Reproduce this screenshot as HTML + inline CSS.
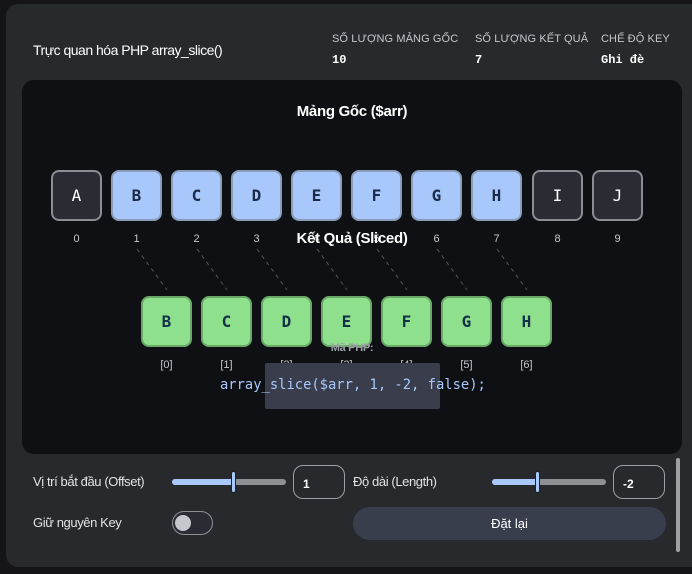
<!DOCTYPE html>
<html><head><meta charset="utf-8"><style>
*{box-sizing:border-box;margin:0;padding:0}
body{width:692px;height:574px;background:#151517;font-family:"Liberation Sans",sans-serif;position:relative;overflow:hidden;color:#e3e3e3}
.card{position:absolute;left:6px;top:4px;width:700px;height:563px;background:#28292c;border-radius:12px}
.a{position:absolute}
.title{left:33px;top:42px;font-size:14px;color:#fff;letter-spacing:-0.5px}
.sl{font-size:11px;color:#c4c7cc;letter-spacing:0.1px;top:33px}
.sv{font-family:"Liberation Mono",monospace;font-weight:bold;font-size:12px;color:#fff;top:53px}
.panel{left:22px;top:80px;width:660px;height:374px;background:#0f1014;border-radius:12px}
.h{font-weight:bold;font-size:15px;color:#fff;width:100%;text-align:center;letter-spacing:-0.3px}
.box{position:absolute;width:51px;height:51px;border-radius:8px;border:2px solid #8a8d92;display:flex;align-items:center;justify-content:center;font-family:"DejaVu Sans Mono","Liberation Mono",monospace;font-weight:bold;font-size:16px}
.d{background:#2b2c33;color:#fff;font-weight:normal}
.b{background:#a8c7fa;color:#1a2a4a;border-color:#8a9cb8}
.g{background:#8fe08c;color:#13314a;border-color:#6aa867}
.idx{position:absolute;font-size:11px;color:#c4c7cc;width:51px;text-align:center}
.lbl{font-size:13px;color:#e3e3e3;letter-spacing:-0.4px}
.track{position:absolute;height:6px;border-radius:3px;background:#8e9094}
.fill{position:absolute;height:6px;border-radius:3px;background:#a8c7fa}
.thumb{position:absolute;width:5px;height:22px;border-radius:3px;background:#a8c7fa;border:1px solid #222}
.inp{position:absolute;width:52px;height:34px;border:1px solid #9aa0a6;border-radius:10px;font-size:12px;color:#fff;padding:11px 0 0 9px;font-weight:bold}
</style></head><body>
<div class="card"></div>
<div class="a title">Trực quan hóa PHP array_slice()</div>
<div class="a sl" style="left:332px">SỐ LƯỢNG MẢNG GỐC</div>
<div class="a sl" style="left:475px">SỐ LƯỢNG KẾT QUẢ</div>
<div class="a sl" style="left:601px">CHẾ ĐỘ KEY</div>
<div class="a sv" style="left:332px">10</div>
<div class="a sv" style="left:475px">7</div>
<div class="a sv" style="left:601px">Ghi đè</div>
<div class="a panel">
<div class="a h" style="top:23px">Mảng Gốc ($arr)</div>
</div>
<svg class="a" style="left:0;top:0" width="692" height="574">
<g stroke="#555" stroke-dasharray="4,4" stroke-width="1">
<line x1="137" y1="249" x2="167" y2="290"/><line x1="197" y1="249" x2="227" y2="290"/>
<line x1="257" y1="249" x2="287" y2="290"/><line x1="317" y1="249" x2="347" y2="290"/>
<line x1="377" y1="249" x2="407" y2="290"/><line x1="437" y1="249" x2="467" y2="290"/>
<line x1="497" y1="249" x2="527" y2="290"/></g></svg>
<div class="box d" style="left:51px;top:170px">A</div>
<div class="box b" style="left:111px;top:170px">B</div>
<div class="box b" style="left:171px;top:170px">C</div>
<div class="box b" style="left:231px;top:170px">D</div>
<div class="box b" style="left:291px;top:170px">E</div>
<div class="box b" style="left:351px;top:170px">F</div>
<div class="box b" style="left:411px;top:170px">G</div>
<div class="box b" style="left:471px;top:170px">H</div>
<div class="box d" style="left:532px;top:170px">I</div>
<div class="box d" style="left:592px;top:170px">J</div>
<div class="idx" style="left:51px;top:233px">0</div><div class="idx" style="left:111px;top:233px">1</div>
<div class="idx" style="left:171px;top:233px">2</div><div class="idx" style="left:231px;top:233px">3</div>
<div class="idx" style="left:291px;top:233px">4</div><div class="idx" style="left:351px;top:233px">5</div>
<div class="idx" style="left:411px;top:233px">6</div><div class="idx" style="left:471px;top:233px">7</div>
<div class="idx" style="left:532px;top:233px">8</div><div class="idx" style="left:592px;top:233px">9</div>
<div class="a h" style="top:230px;left:0;width:704px">Kết Quả (Sliced)</div>
<div class="idx" style="left:141px;top:359px">[0]</div><div class="idx" style="left:201px;top:359px">[1]</div>
<div class="idx" style="left:261px;top:359px">[2]</div><div class="idx" style="left:321px;top:359px">[3]</div>
<div class="idx" style="left:381px;top:359px">[4]</div><div class="idx" style="left:441px;top:359px">[5]</div>
<div class="idx" style="left:501px;top:359px">[6]</div>
<div class="a" style="left:265px;top:363px;width:175px;height:46px;background:#393d4c;border-radius:2px"></div>
<div class="box g" style="left:141px;top:296px">B</div>
<div class="box g" style="left:201px;top:296px">C</div>
<div class="box g" style="left:261px;top:296px">D</div>
<div class="box g" style="left:321px;top:296px">E</div>
<div class="box g" style="left:381px;top:296px">F</div>
<div class="box g" style="left:441px;top:296px">G</div>
<div class="box g" style="left:501px;top:296px">H</div>
<div class="a" style="left:0;width:704px;text-align:center;top:342px;font-size:11px;font-weight:bold;color:#9aa0a6;letter-spacing:-0.3px">Mã PHP:</div>
<div class="a" style="left:220px;top:377px;font-family:'DejaVu Sans Mono',monospace;font-size:13.8px;color:#a8c7fa">array_slice($arr, 1, -2, false);</div>
<div class="a lbl" style="left:33px;top:474px">Vị trí bắt đầu (Offset)</div>
<div class="track" style="left:172px;top:479px;width:114px"></div>
<div class="fill" style="left:172px;top:479px;width:62px"></div>
<div class="thumb" style="left:231px;top:471px"></div>
<div class="inp" style="left:293px;top:465px">1</div>
<div class="a lbl" style="left:353px;top:474px">Độ dài (Length)</div>
<div class="track" style="left:492px;top:479px;width:114px"></div>
<div class="fill" style="left:492px;top:479px;width:46px"></div>
<div class="thumb" style="left:535px;top:471px"></div>
<div class="inp" style="left:613px;top:465px">-2</div>
<div class="a lbl" style="left:33px;top:515px">Giữ nguyên Key</div>
<div class="a" style="left:172px;top:511px;width:41px;height:24px;border-radius:12px;border:1px solid #8e9094;background:#2b2c33"></div>
<div class="a" style="left:175px;top:515px;width:16px;height:16px;border-radius:50%;background:#c4c7cc"></div>
<div class="a" style="left:353px;top:507px;width:313px;height:33px;border-radius:17px;background:#393e4d;color:#fff;font-size:13px;text-align:center;line-height:33px">Đặt lại</div>
<div class="a" style="left:676px;top:458px;width:4px;height:94px;border-radius:2px;background:#a0a0a0"></div>
</body></html>
